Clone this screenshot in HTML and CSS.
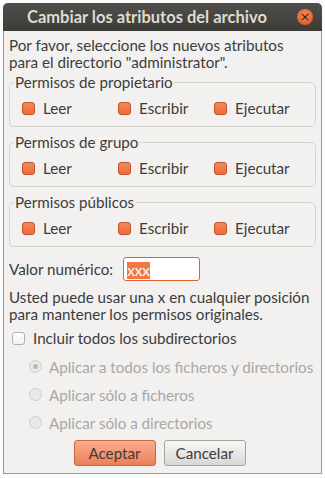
FILE: index.html
```html
<!DOCTYPE html>
<html lang="es">
<head>
    <meta charset="UTF-8">
    <meta name="viewport" content="width=device-width, initial-scale=1.0">
    <title>Cambiar los atributos del archivo</title>
    <link rel="stylesheet" href="styles.css">
</head>
<body>

    <div class="window">
        <!-- Barra de título -->
        <div class="titlebar">
            <span class="title">Cambiar los atributos del archivo</span>
            <span class="close">&#215;</span>
        </div>

        <div class="content">
            <p class="intro">Por favor, seleccione los nuevos atributos<br>para el directorio "administrator".</p>

            <fieldset class="frame">
                <legend>Permisos de propietario</legend>
                <div class="perm-row">
                    <label class="check"><span class="box on"></span>Leer</label>
                    <label class="check"><span class="box on"></span>Escribir</label>
                    <label class="check"><span class="box on"></span>Ejecutar</label>
                </div>
            </fieldset>

            <fieldset class="frame">
                <legend>Permisos de grupo</legend>
                <div class="perm-row">
                    <label class="check"><span class="box on"></span>Leer</label>
                    <label class="check"><span class="box on"></span>Escribir</label>
                    <label class="check"><span class="box on"></span>Ejecutar</label>
                </div>
            </fieldset>

            <fieldset class="frame">
                <legend>Permisos públicos</legend>
                <div class="perm-row">
                    <label class="check"><span class="box on"></span>Leer</label>
                    <label class="check"><span class="box on"></span>Escribir</label>
                    <label class="check"><span class="box on"></span>Ejecutar</label>
                </div>
            </fieldset>

            <div class="value-row">
                <span>Valor numérico:</span>
                <div class="entry"><span class="selected">xxx</span></div>
            </div>

            <p class="hint">Usted puede usar una x en cualquier posición<br>para mantener los permisos originales.</p>

            <label class="check sub"><span class="box"></span>Incluir todos los subdirectorios</label>

            <div class="radios">
                <div class="radio active"><span class="dot"></span>Aplicar a todos los ficheros y directorios</div>
                <div class="radio"><span class="dot"></span>Aplicar sólo a ficheros</div>
                <div class="radio"><span class="dot"></span>Aplicar sólo a directorios</div>
            </div>

            <div class="buttons">
                <button class="btn primary">Aceptar</button>
                <button class="btn">Cancelar</button>
            </div>
        </div>
    </div>

</body>
</html>
```

FILE: styles.css
```css
body {
    font-family: Lato, "Open Sans", sans-serif;
    font-size: 15.2px;
    background-color: #fbfbfb;
    margin: 0;
    padding: 3px 0 0 3px;
    color: #3c3c3c;
}

.window {
    width: 319px;
    height: 471px;
    box-sizing: border-box;
    background-color: #f2f1f0;
    border: 1px solid #9c9a96;
    border-top: none;
    border-radius: 5px 5px 0 0;
    display: flex;
    flex-direction: column;
}

.titlebar {
    height: 28px;
    margin: 0 -1px;
    padding: 0 9px 0 24px;
    display: flex;
    align-items: center;
    justify-content: space-between;
    background: linear-gradient(#504f4b, #3c3b37);
    border-radius: 5px 5px 0 0;
}

.title {
    color: #dfdbd2;
    font-weight: bold;
    font-size: 16.5px;
}

.close {
    width: 16px;
    height: 16px;
    border-radius: 50%;
    background: radial-gradient(circle at 50% 35%, #f7885c, #d9501c);
    color: #3a2218;
    font-size: 13px;
    line-height: 16px;
    text-align: center;
    font-family: "DejaVu Sans", sans-serif;
}

.content {
    padding: 6px 5px 0 5px;
    display: flex;
    flex-direction: column;
}

.intro,
.hint {
    margin: 0;
    line-height: 17px;
}

.frame {
    margin: 3px 0 0 0;
    padding: 0;
    border: 1px solid #d5d3ce;
    border-radius: 5px;
    height: 53px;
    box-sizing: border-box;
}

.frame + .frame {
    margin-top: 7px;
}

.frame legend {
    padding: 0 1px;
    margin-left: 4px;
    line-height: 16px;
}

.perm-row {
    display: flex;
    padding: 9px 0 0 12px;
}

.check {
    display: flex;
    align-items: center;
    width: 96px;
    height: 18px;
}

.box {
    width: 13px;
    height: 13px;
    box-sizing: border-box;
    border-radius: 3px;
    margin-right: 8px;
    border: 1px solid #b4b2ad;
    background: linear-gradient(#ffffff, #f2f1f0);
}

.box.on {
    border-color: #c4532a;
    background: linear-gradient(#f6885a, #ec6d3a);
}

.value-row {
    display: flex;
    align-items: center;
    margin-top: 10px;
    gap: 10px;
}

.entry {
    width: 77px;
    height: 24px;
    box-sizing: border-box;
    border: 1px solid #e0612c;
    border-radius: 3px;
    background-color: #fff;
    padding: 3px 0 0 3px;
}

.selected {
    background-color: #f07746;
    color: #fff;
    line-height: 17px;
    display: inline-block;
}

.hint {
    margin-top: 8px;
}

.check.sub {
    width: auto;
    margin: 6px 0 0 3px;
}

.radios {
    margin-top: 11px;
    padding-left: 20px;
    display: flex;
    flex-direction: column;
    gap: 11px;
    color: #aaa8a3;
}

.radio {
    display: flex;
    align-items: center;
    height: 17px;
}

.dot {
    width: 13px;
    height: 13px;
    box-sizing: border-box;
    border-radius: 50%;
    border: 1px solid #cfcdc8;
    background-color: #e9e8e6;
    margin-right: 7px;
    display: flex;
    align-items: center;
    justify-content: center;
}

.radio.active .dot::after {
    content: "";
    width: 5px;
    height: 5px;
    border-radius: 50%;
    background-color: #bcbab5;
}

.buttons {
    display: flex;
    justify-content: center;
    gap: 8px;
    margin-top: 9px;
    padding-right: 6px;
}

.btn {
    width: 82px;
    height: 26px;
    font-family: inherit;
    font-size: 15.2px;
    color: #3c3c3c;
    border: 1px solid #a6a49f;
    border-radius: 3px;
    background: linear-gradient(#f7f7f6, #d9d7d4);
    padding: 0;
}

.btn.primary {
    border-color: #c9663f;
    background: linear-gradient(#f8ad92, #ee7f58);
}
```
